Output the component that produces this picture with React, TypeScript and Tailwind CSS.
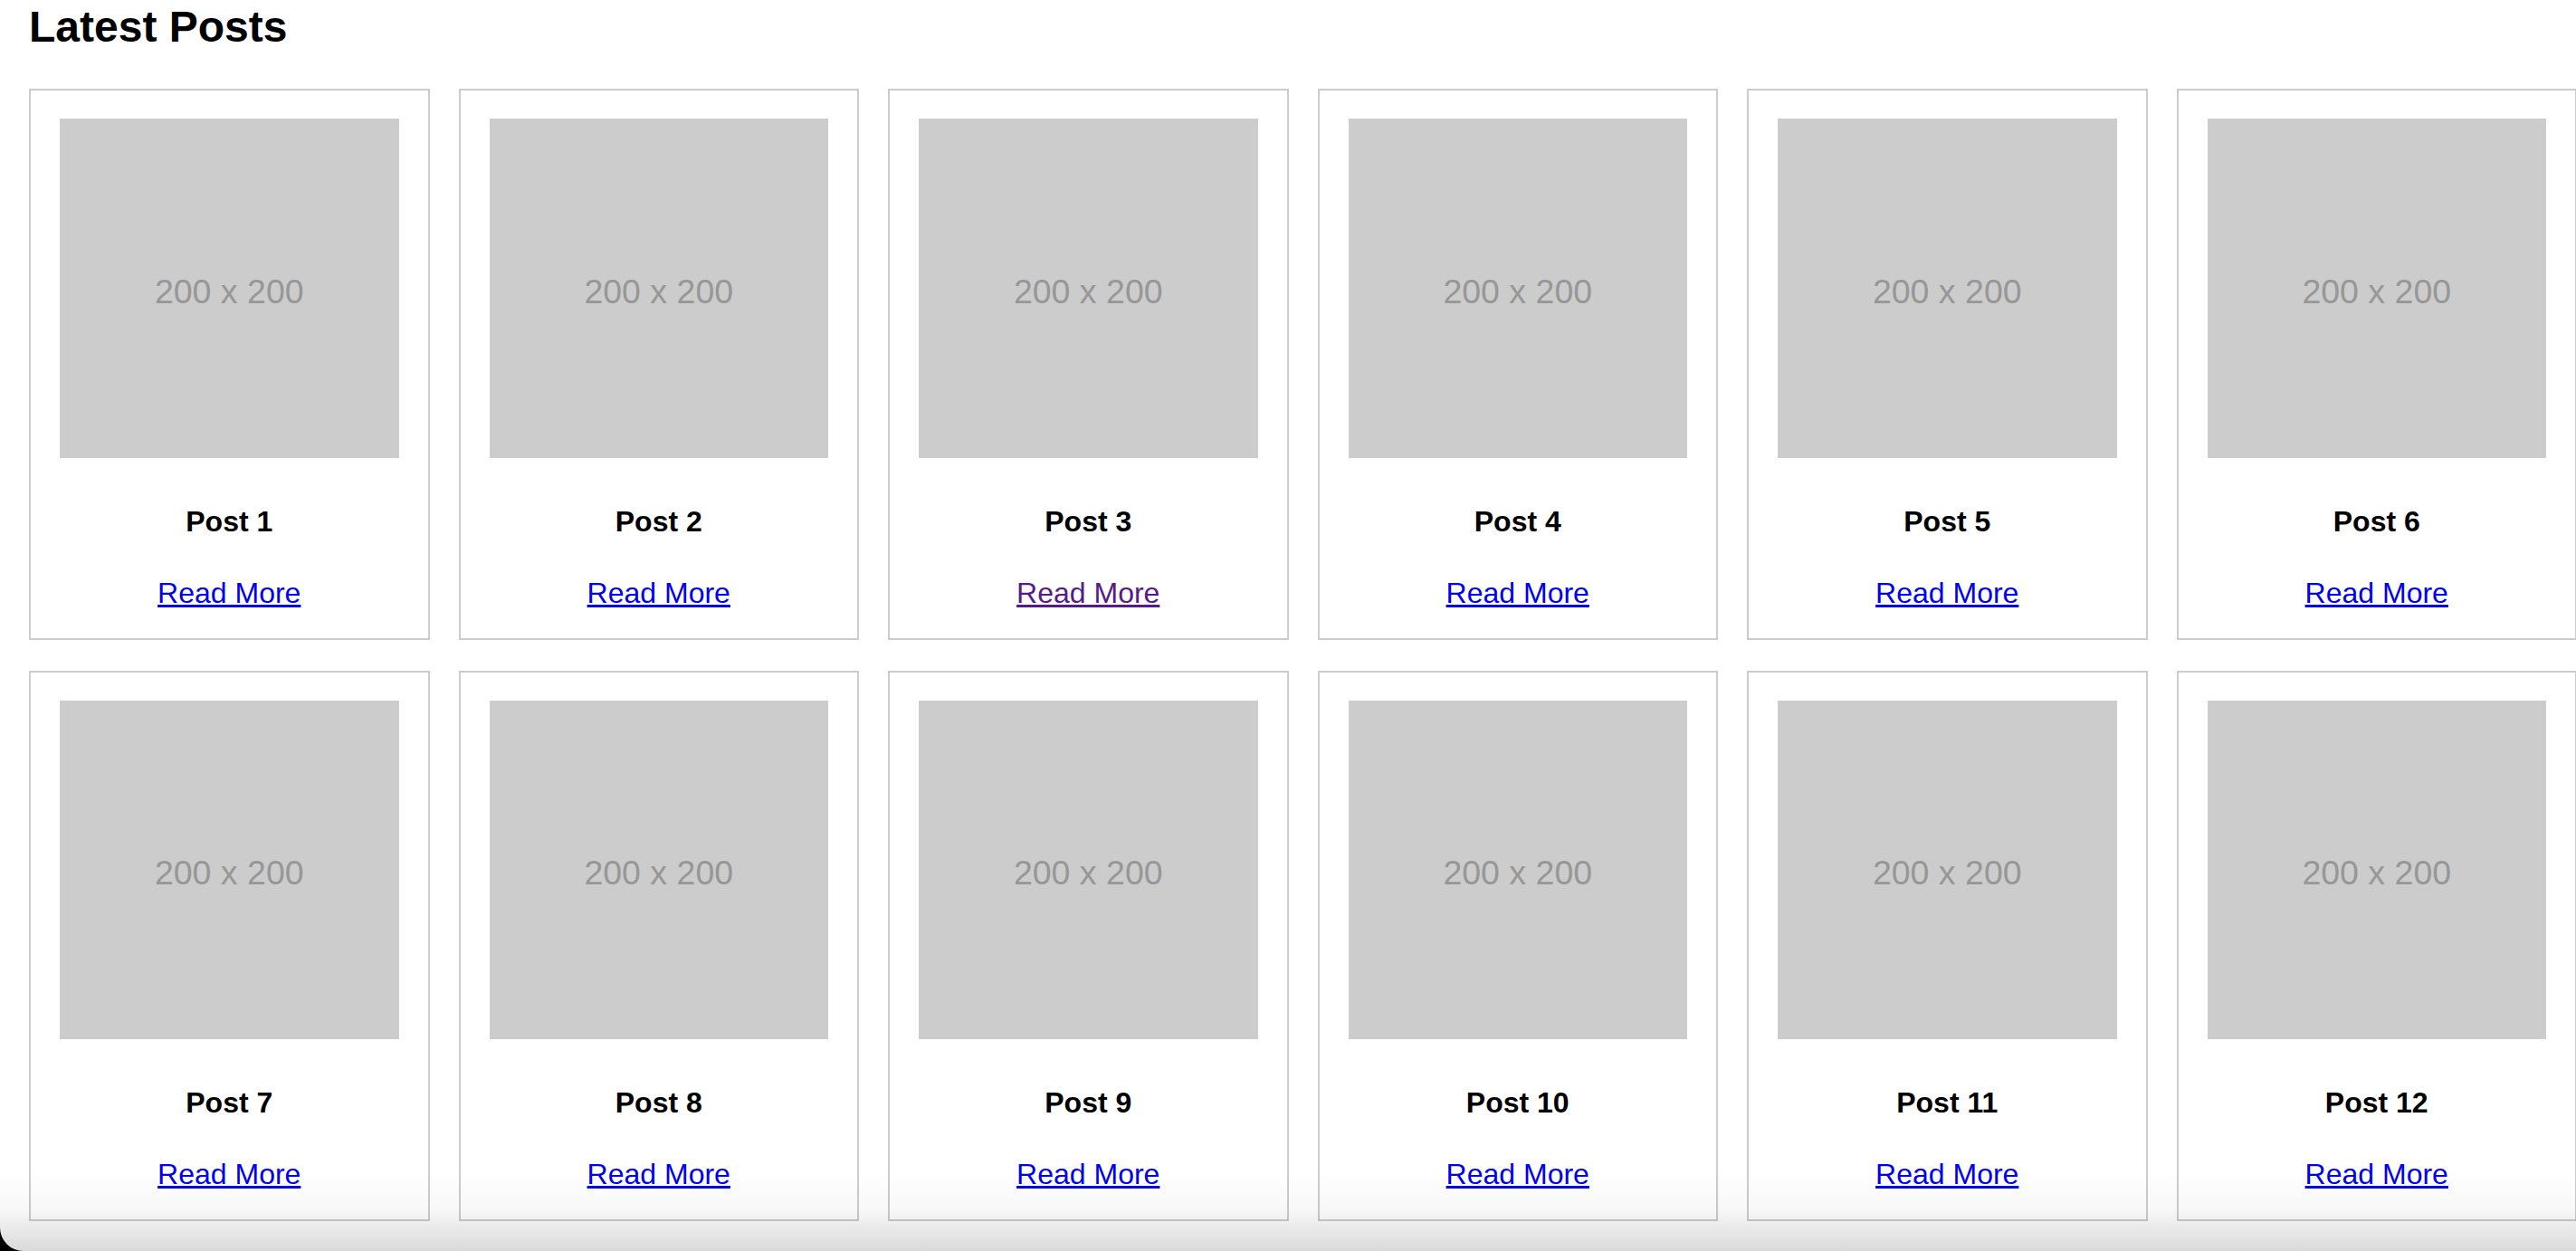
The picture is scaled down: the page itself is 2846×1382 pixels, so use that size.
import React from 'react';

const posts = Array.from({ length: 12 }, (_, i) => ({
  id: i + 1,
  title: `Post ${i + 1}`,
  visited: i === 2,
}));

function Placeholder() {
  return (
    <div className="flex aspect-square w-full items-center justify-center bg-[#cccccc] pt-[8px]">
      <span className="text-[37.5px] leading-none text-[#979797]">200 x 200</span>
    </div>
  );
}

function PostCard({ title, visited }: { title: string; visited: boolean }) {
  return (
    <div className="border-2 border-[#cccccc] bg-white px-[32px] pt-[31px] pb-[31px] text-center">
      <Placeholder />
      <h3 className="mt-[52px] text-[32px] font-bold leading-[37px] text-black">{title}</h3>
      <p className="mt-[42px] text-[32px] leading-[37px]">
        <a href="#" className={visited ? 'text-[#551a8b] underline' : 'text-[#0000ee] underline'}>
          Read More
        </a>
      </p>
    </div>
  );
}

export default function App() {
  return (
    <div className="h-[1382px] w-[2846px] overflow-hidden bg-black font-['Liberation_Sans',Arial,sans-serif]">
      <div className="relative h-full overflow-hidden rounded-bl-[26px] bg-white pl-[32px]">
        <h2 className="mt-[3px] text-[48px] font-bold leading-[54px] text-black">Latest Posts</h2>
        <div className="mt-[41px] grid grid-cols-[repeat(6,442.5px)] gap-x-[32px] gap-y-[34px]">
          {posts.map((post) => (
            <PostCard key={post.id} title={post.title} visited={post.visited} />
          ))}
        </div>
        <div className="pointer-events-none absolute bottom-0 left-0 right-0 h-[90px] bg-gradient-to-b from-black/0 via-black/3 to-black/15" />
      </div>
    </div>
  );
}
